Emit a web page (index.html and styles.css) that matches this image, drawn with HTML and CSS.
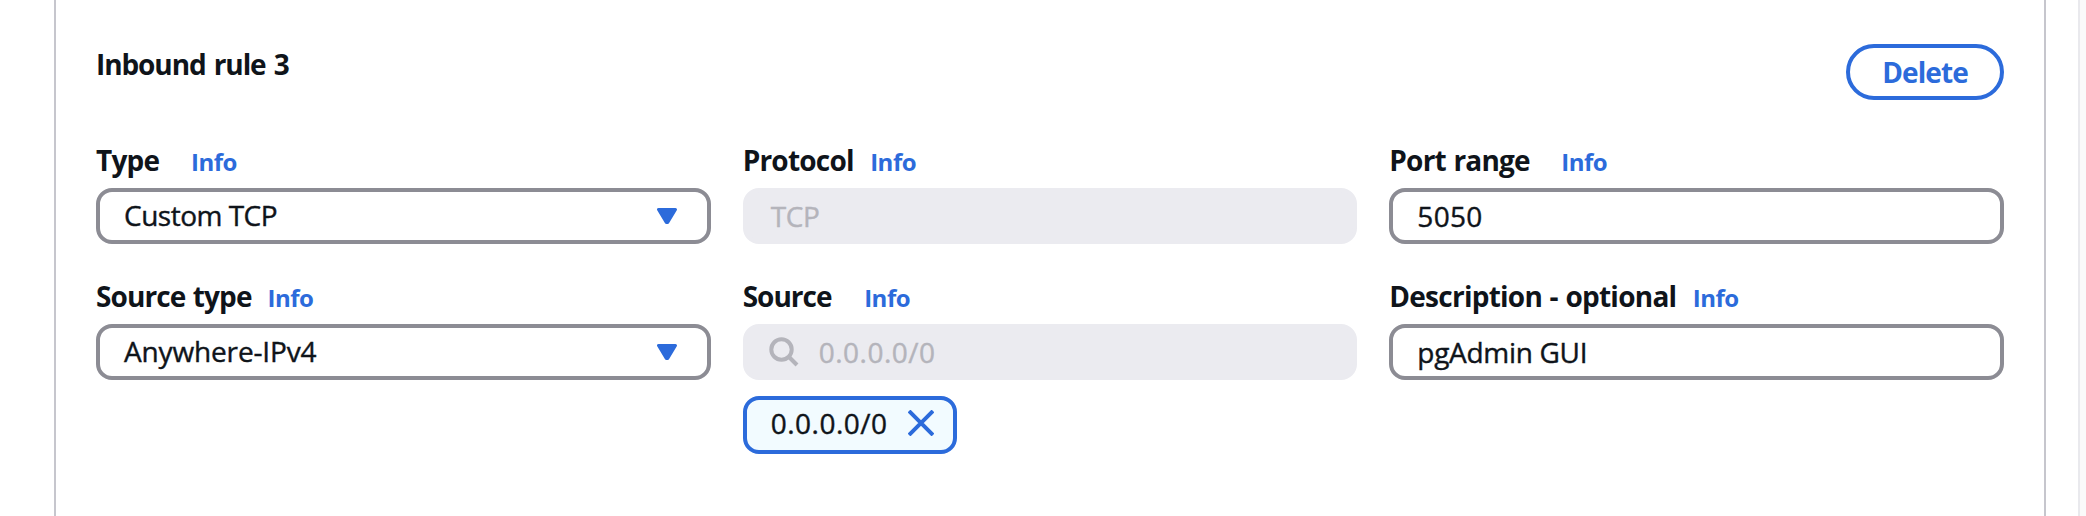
FILE: index.html
```html
<!DOCTYPE html>
<html lang="en">
<head>
<meta charset="utf-8">
<title>Inbound rules</title>
<link rel="stylesheet" href="styles.css">
</head>
<body>
<main class="page">
  <section class="panel">
    <header class="rule-header">
      <h2 class="rule-title">Inbound rule 3</h2>
      <button class="delete" type="button"><span class="delete-text">Delete</span></button>
    </header>
    <div class="fields">
      <div class="field">
        <div class="label"><span class="name name-type">Type</span><a class="info">Info</a></div>
        <div class="control"><span class="value value-type">Custom TCP</span><svg class="caret" viewBox="0 0 20 16"><path d="M1.5 1.5h17L10.7 14.5h-1.4z"/></svg></div>
      </div>
      <div class="field">
        <div class="label"><span class="name name-protocol">Protocol</span><a class="info">Info</a></div>
        <div class="control disabled"><span class="value value-low value-protocol">TCP</span></div>
      </div>
      <div class="field">
        <div class="label"><span class="name name-port">Port range</span><a class="info">Info</a></div>
        <div class="control"><span class="value value-low value-port">5050</span></div>
      </div>
      <div class="field">
        <div class="label"><span class="name name-source-type">Source type</span><a class="info">Info</a></div>
        <div class="control"><span class="value value-source-type">Anywhere-IPv4</span><svg class="caret" viewBox="0 0 20 16"><path d="M1.5 1.5h17L10.7 14.5h-1.4z"/></svg></div>
      </div>
      <div class="field">
        <div class="label"><span class="name name-source">Source</span><a class="info">Info</a></div>
        <div class="control control-search disabled"><svg class="search" viewBox="0 0 30 30"><circle cx="12.5" cy="12.5" r="10.2"/><path d="M19.5 19.5l8.5 8.5"/></svg><span class="value value-low value-ip">0.0.0.0/0</span></div>
        <div class="token"><span class="value value-ip">0.0.0.0/0</span><svg class="close" viewBox="0 0 26 26"><path d="M1 1l24 24M25 1L1 25"/></svg></div>
      </div>
      <div class="field">
        <div class="label"><span class="name name-description">Description - optional</span><a class="info">Info</a></div>
        <div class="control"><span class="value value-low value-description">pgAdmin GUI</span></div>
      </div>
    </div>
  </section>
</main>
</body>
</html>
```
FILE: styles.css
```css
* { box-sizing: border-box; }

body {
  margin: 0;
  background: #fafafa;
  color: #0f141a;
  font: 400 28px/40px "Open Sans", "Noto Sans", sans-serif;
}

.page {
  width: 2080px;
  height: 516px;
  padding-left: 54px;
  border-right: 2px solid #e9e9ed;
  background: #fff;
  overflow: hidden;
}

.panel {
  width: 1992px;
  height: 516px;
  padding: 44px 40px 0;
  border: solid #c6c6cd;
  border-width: 0 2px;
}

.rule-header {
  display: flex;
  align-items: flex-start;
  justify-content: space-between;
  height: 96px;
}

.rule-title {
  margin: 0;
  font-size: 28px;
  line-height: 40px;
  letter-spacing: -1.1px;
  word-spacing: 2px;
}

.delete {
  display: flex;
  align-items: center;
  justify-content: center;
  width: 158px;
  height: 56px;
  padding: 0;
  border: 4px solid #2c6bdb;
  border-radius: 28px;
  background: #fff;
  color: #2c6bdb;
  font: 700 28px/40px "Open Sans", "Noto Sans", sans-serif;
}

.delete-text { letter-spacing: -0.9px; }

.fields {
  display: grid;
  grid-template-columns: repeat(3, 1fr);
  gap: 32px;
}

.field { height: 104px; }

.label {
  display: flex;
  align-items: baseline;
  height: 40px;
  margin-bottom: 8px;
}

.name {
  font-weight: 700;
  letter-spacing: -0.8px;
  word-spacing: 1px;
  white-space: nowrap;
}

.name-type { width: 95px; }
.name-protocol { width: 127.5px; }
.name-port { width: 172px; }
.name-source-type { width: 171.5px; letter-spacing: -0.9px; }
.name-source { width: 121.5px; letter-spacing: -1px; }
.name-description { width: 303.5px; letter-spacing: -0.75px; }

.info {
  color: #2c6bdb;
  font-size: 24px;
  font-weight: 700;
  line-height: 36px;
  letter-spacing: -0.5px;
}

.control {
  display: flex;
  align-items: center;
  height: 56px;
  padding: 0 30px 0 24px;
  border: 4px solid #8c8c94;
  border-radius: 16px;
  background: #fff;
}

.control-search { padding-left: 22px; }

.disabled {
  border-color: #ebebf0;
  background: #ebebf0;
  color: #b4b4bb;
}

.value {
  padding-bottom: 2px;
  white-space: nowrap;
  -webkit-text-stroke: 0.4px currentColor;
}

.value-low { padding-bottom: 0; }
.value-type { letter-spacing: -0.5px; }
.value-source-type { letter-spacing: -0.15px; }
.value-protocol { letter-spacing: -0.3px; }
.value-ip { letter-spacing: 0.5px; }
.value-port { letter-spacing: 0.3px; }
.value-description { letter-spacing: -0.3px; }

.caret {
  width: 20px;
  height: 16px;
  margin-left: auto;
  fill: #2c6bdb;
  stroke: #2c6bdb;
  stroke-width: 3px;
  stroke-linejoin: round;
}

.search {
  width: 30px;
  height: 30px;
  margin-right: 20px;
  fill: none;
  stroke: #b4b4bb;
  stroke-width: 4px;
}

.token {
  display: flex;
  align-items: center;
  justify-content: space-between;
  width: 214px;
  height: 58px;
  margin-top: 16px;
  padding: 0 19px 4px 24px;
  border: 4px solid #2c6bdb;
  border-radius: 16px;
  background: #f2fbff;
}

.token .value { padding-bottom: 0; }

.close {
  width: 26px;
  height: 26px;
  fill: none;
  stroke: #2c6bdb;
  stroke-width: 4px;
}
```
